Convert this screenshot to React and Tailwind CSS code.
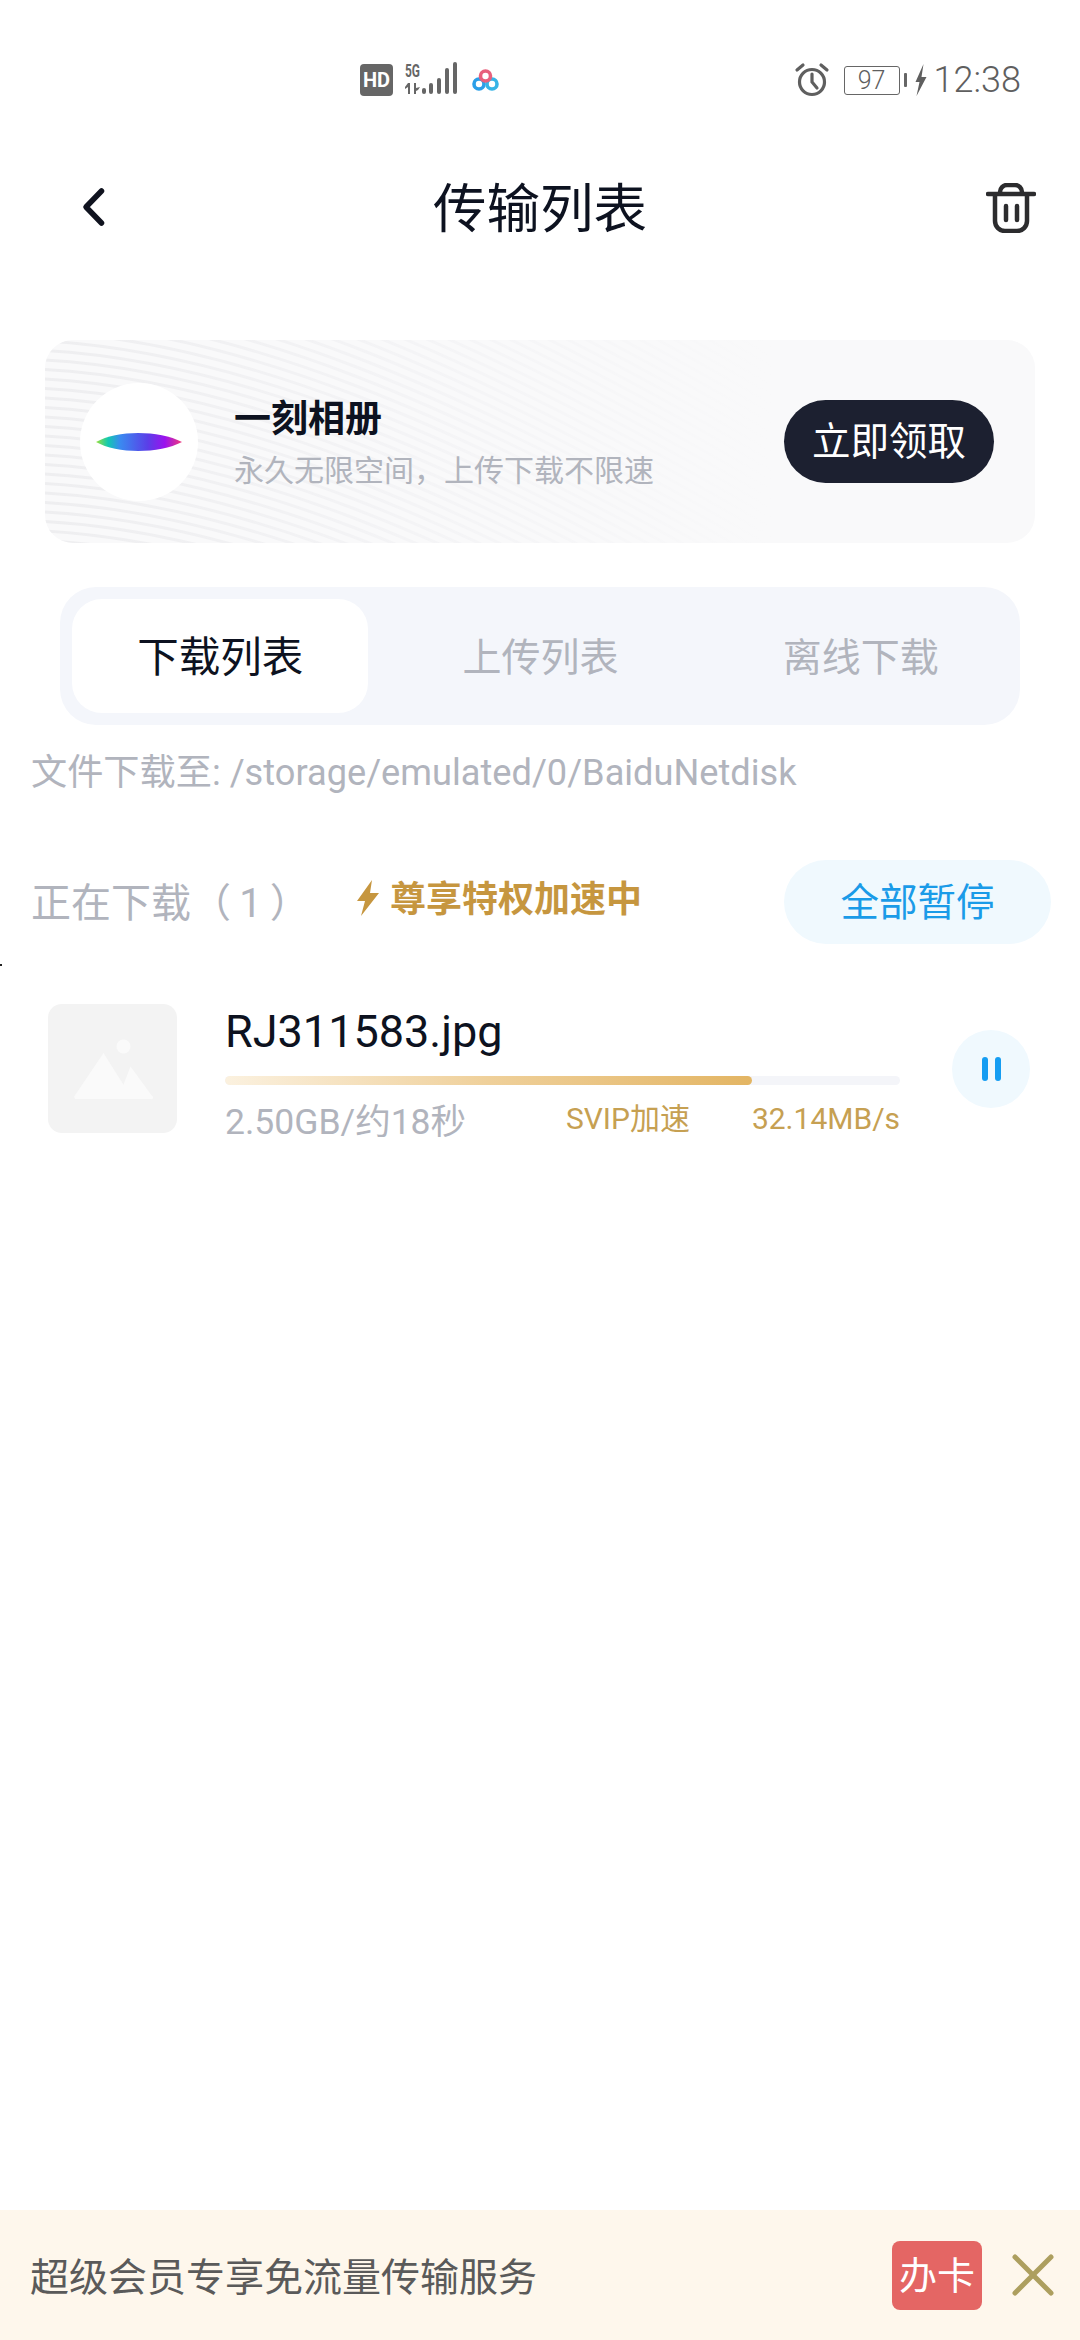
import React from "react";

const FONT = { fontFamily: '"Roboto","Noto Sans CJK SC",sans-serif' };

function BannerLines() {
  const lines = [];
  for (let i = 0; i < 62; i++) {
    const o = i * 9.5 - 370;
    lines.push(
      <path key={i} d={`M-10 ${o} C 180 ${o + 8}, 400 ${o + 90}, 740 ${o + 290}`} fill="none" stroke="url(#fade)" strokeWidth="3" />
    );
  }
  return (
    <svg className="absolute left-0 top-0" width="740" height="203" viewBox="0 0 740 203">
      <defs>
        <linearGradient id="fade" gradientUnits="userSpaceOnUse" x1="0" y1="0" x2="730" y2="0">
          <stop offset="0" stopColor="#eeeef0" />
          <stop offset="0.5" stopColor="#f4f4f6" />
          <stop offset="1" stopColor="#f9f9fa" />
        </linearGradient>
      </defs>
      {lines}
    </svg>
  );
}

function StatusBar() {
  return (
    <div className="flex h-[80px] items-center mt-[40px] pl-[360px] pr-[59px] text-[#5f5f5f]">
      <svg width="33" height="32" viewBox="0 0 33 32">
        <rect width="33" height="32" rx="4" fill="#666" />
        <text x="16.5" y="23" textAnchor="middle" fontSize="20" fontWeight="700" fill="#fff" fontFamily="Roboto">HD</text>
      </svg>
      <svg className="ml-[7px]" width="58" height="46" viewBox="0 -6 58 46" fill="#666">
        <text x="5" y="14" fontSize="19" fontWeight="700" fontFamily="Roboto" textLength="15" lengthAdjust="spacingAndGlyphs">5G</text>
        <path d="M8 20h2v11H8v-7l-3 2v-2zM14 20h2v5l4-1-2 3-2 1v3h-2z" />
        <rect x="22" y="25" width="4" height="6" rx="2" />
        <rect x="29" y="20" width="4" height="11" rx="2" />
        <rect x="37" y="15" width="4" height="16" rx="2" />
        <rect x="45" y="5" width="4" height="26" rx="2" />
        <rect x="53" y="-1" width="4" height="32" rx="2" />
      </svg>
      <svg className="ml-[14px]" width="27" height="22" viewBox="0 0 27 22" fill="none" strokeWidth="3.6">
        <circle cx="7" cy="15" r="5" stroke="#2b9fe8" />
        <circle cx="20" cy="15" r="5" stroke="#36b4e6" />
        <circle cx="13.5" cy="7" r="5" stroke="#e8607c" />
      </svg>
      <div className="flex-1" />
      <svg width="36" height="36" viewBox="0 0 36 36" fill="none" stroke="#5f5f5f" strokeWidth="3.2" strokeLinecap="round">
        <circle cx="18" cy="20" r="12.5" />
        <path d="M18 12v8l5 6M3 8l6-5M33 8l-6-5" />
      </svg>
      <div className="ml-[14px] flex h-[29px] w-[56px] items-center justify-center rounded-[3px] border border-[#666] text-[25px] font-light leading-none">97</div>
      <div className="ml-[4px] h-[14px] w-[3px] rounded-[1px] bg-[#666]" />
      <svg className="ml-[6px]" width="15" height="32" viewBox="0 0 14 32" fill="#5f5f5f">
        <path d="M10 0 2 18h4l-3 14 10-19H8z" />
      </svg>
      <span className="ml-[6px] text-[36px] font-light leading-none">12:38</span>
    </div>
  );
}

function Header() {
  return (
    <div className="flex h-[128px] mt-[24px] items-center justify-between pl-[78px] pr-[44px]">
      <svg width="30" height="44" viewBox="0 0 30 44" fill="none" stroke="#10131f" strokeWidth="5.5" strokeLinecap="round" strokeLinejoin="round">
        <path d="M23.5 5 8 21l15.5 16" />
      </svg>
      <span className="-ml-[14px] mt-[3px] text-[53.5px] leading-none text-[#0d1220]">传输列表</span>
      <svg width="50" height="50" viewBox="0 0 50 50" fill="none" stroke="#2c2c2e" strokeWidth="4.5" strokeLinecap="round" strokeLinejoin="round">
        <path d="M2 11h46M14 11V9a7 7 0 0 1 7-7h8a7 7 0 0 1 7 7v2M9 11v27a10 10 0 0 0 10 10h12a10 10 0 0 0 10-10V11M20 23v14M31 23v14" />
      </svg>
    </div>
  );
}

function Banner() {
  return (
    <div className="relative mx-[45px] mt-[68px] flex h-[203px] items-center overflow-hidden rounded-[28px] bg-[#f9f9fa] pl-[35px] pr-[41px]">
      <BannerLines />
      <div className="relative flex h-[118px] w-[118px] items-center justify-center rounded-full bg-white">
        <svg width="88" height="22" viewBox="0 0 88 22">
          <defs>
            <linearGradient id="eye" x1="0" x2="1" y1="0" y2="0">
              <stop offset="0" stopColor="#9be03a" />
              <stop offset="0.14" stopColor="#12c9b0" />
              <stop offset="0.28" stopColor="#3a8af0" />
              <stop offset="0.6" stopColor="#5a3fe8" />
              <stop offset="0.8" stopColor="#9a12ee" />
              <stop offset="1" stopColor="#f03a7a" />
            </linearGradient>
          </defs>
          <path d="M1 11C22 -1 64 -1 87 11 64 23 22 23 1 11z" fill="url(#eye)" />
        </svg>
      </div>
      <div className="relative ml-[36px] mt-[4px] flex flex-col">
        <span className="text-[37px] font-bold leading-[48px] text-[#0d1220]">一刻相册</span>
        <span className="mt-[7px] text-[30px] leading-[40px] text-[#b1b4bd]">永久无限空间，上传下载不限速</span>
      </div>
      <div className="flex-1" />
      <div className="relative flex h-[83px] w-[210px] items-center justify-center rounded-full bg-[#1c2030] pt-[1px] text-[38.5px] text-white">立即领取</div>
    </div>
  );
}

function Tabs() {
  return (
    <div className="mx-[60px] mt-[44px] flex h-[138px] items-center rounded-[36px] bg-[#f4f6fb] pl-[12px]">
      <div className="flex h-[114px] w-[298px] items-center justify-center rounded-[30px] bg-white pt-[4px] text-[41.5px] text-[#0d1220]">下载列表</div>
      <div className="ml-[13px] w-[320px] pt-[5px] text-center text-[39px] text-[#b1b4bd]">上传列表</div>
      <div className="ml-[2px] w-[320px] pt-[5px] text-center text-[39px] text-[#b1b4bd]">离线下载</div>
    </div>
  );
}

function Row() {
  return (
    <div className="mt-[60px] flex items-start pl-[48px]">
      <div className="flex h-[129px] w-[129px] shrink-0 items-center justify-center rounded-[14px] bg-[#f3f3f3]">
        <svg width="80" height="62" viewBox="0 0 80 62" fill="#fafafa">
          <circle cx="50.5" cy="8.5" r="7" />
          <path d="M30.5 15 1.5 58a2 2 0 0 0 2 3h56z" />
          <path d="M57.5 28.5 45 61h33a1.500 1.500 0 0 0 1-3z" />
        </svg>
      </div>
      <div className="ml-[48px] flex w-[675px] flex-col">
        <span className="text-[45px] leading-[56px] text-[#0d1220]">RJ311583.jpg</span>
        <div className="mt-[16px] h-[9px] overflow-hidden rounded-full bg-[#f4f5f9]">
          <div className="h-full w-[527px] rounded-full bg-gradient-to-r from-[#fbf1df] via-[#efd09a] to-[#e3b563]" />
        </div>
        <div className="mt-[10px] flex h-[48px] items-center">
          <span className="mt-[6px] text-[35.5px] leading-[42px] text-[#b1b4bd]">2.50GB/约18秒</span>
          <div className="flex-1" />
          <span className="text-[30px] leading-[42px] text-[#c6a052]">SVIP加速</span>
          <span className="ml-[62px] text-[30px] leading-[42px] text-[#c6a052]">32.14MB/s</span>
        </div>
      </div>
      <div className="ml-[52px] mt-[26px] flex h-[78px] w-[78px] items-center justify-center gap-[7px] rounded-full bg-[#f0f9fe]">
        <div className="h-[24px] w-[6px] rounded-full bg-[#159df2]" />
        <div className="h-[24px] w-[6px] rounded-full bg-[#159df2]" />
      </div>
    </div>
  );
}

export default function App() {
  return (
    <div style={FONT} className="relative flex h-[2340px] w-[1080px] flex-col overflow-hidden bg-white">
      <StatusBar />
      <Header />
      <Banner />
      <Tabs />
      <div className="ml-[31px] mt-[25px] text-[36.2px] leading-[46px] text-[#b1b4bd]">文件下载至: /storage/emulated/0/BaiduNetdisk</div>
      <div className="mt-[64px] flex h-[84px] items-center pl-[31px] pr-[29px]">
        <span className="mt-[4px] w-[326px] text-[40px] text-[#b1b4bd]">正在下载（&#8201;1&#8201;）</span>
        <svg className="-mt-[8px]" width="22" height="36" viewBox="0 0 22 36" fill="#c6963f">
          <path d="M15 0 0 21h8L4 36 22 13h-9z" />
        </svg>
        <span className="-mt-[4px] ml-[11px] text-[36px] font-bold text-[#c6963f]">尊享特权加速中</span>
        <div className="flex-1" />
        <div className="flex h-[84px] w-[267px] items-center justify-center rounded-full bg-[#f0f9fe] pt-[2px] text-[38.5px] text-[#1a9be8]">全部暂停</div>
      </div>
      <Row />
      <div className="flex-1" />
      <div className="flex h-[130px] items-center bg-[#fef7ec] pl-[30px] pr-[26px]">
        <span className="mt-[6px] text-[39px] text-[#5a5a5a]">超级会员专享免流量传输服务</span>
        <div className="flex-1" />
        <div className="flex h-[69px] w-[90px] items-center justify-center rounded-[8px] bg-[#e46664] pt-[2px] text-[38px] text-white">办卡</div>
        <svg className="ml-[30px]" width="42" height="42" viewBox="0 0 42 42" stroke="#ad9f5f" strokeWidth="5" strokeLinecap="round">
          <path d="M3 3l36 36M39 3 3 39" />
        </svg>
      </div>
      <div className="absolute left-0 top-[964px] h-[2px] w-[2px] bg-[#222]" />
    </div>
  );
}
